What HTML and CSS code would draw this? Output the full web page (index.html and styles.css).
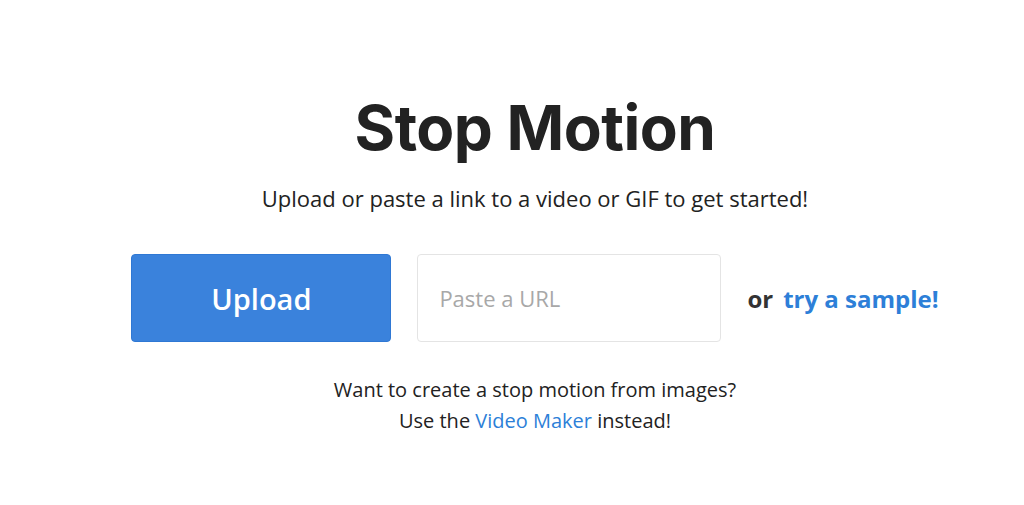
FILE: index.html
```html
<!DOCTYPE html>
<html lang="en">
<head>
    <meta charset="UTF-8">
    <meta name="viewport" content="width=device-width, initial-scale=1.0">
    <title>Stop Motion</title>
    <link rel="stylesheet" href="styles.css">
</head>
<body>
    <div class="container">
        <h1>Stop Motion</h1>
        <p class="lead">Upload or paste a link to a video or GIF to get started!</p>

        <div class="actions">
            <button type="button" class="upload-btn">Upload</button>
            <input type="text" class="url-input" placeholder="Paste a URL">
            <div class="sample">
                <span class="or">or</span>
                <a href="#" class="sample-link">try a sample!</a>
            </div>
        </div>

        <p class="note">
            Want to create a stop motion from images?<br>
            Use the <a href="#">Video Maker</a> instead!
        </p>
    </div>
</body>
</html>
```

FILE: styles.css
```css
body {
    font-family: "Open Sans", Arial, sans-serif;
    background-color: #fff;
    color: #222;
    margin: 0;
    padding: 0 0 0 46px;
}

.container {
    display: flex;
    flex-direction: column;
    align-items: center;
    padding-top: 90px;
}

h1 {
    font-family: Inter, "Open Sans", sans-serif;
    font-size: 62px;
    font-weight: 700;
    letter-spacing: -0.5px;
    color: #222;
    margin: 0;
    line-height: 76px;
}

.lead {
    font-size: 22px;
    color: #222;
    margin: 17px 0 0;
    line-height: 30px;
}

.actions {
    display: flex;
    align-items: center;
    gap: 26px;
    margin-top: 41px;
}

.upload-btn {
    width: 260px;
    height: 88px;
    background-color: #3a82dc;
    color: #fff;
    font-family: "Open Sans", sans-serif;
    font-size: 29px;
    font-weight: 600;
    border: 1px solid #2f78d4;
    border-radius: 4px;
    cursor: pointer;
}

.url-input {
    width: 304px;
    height: 88px;
    padding: 0 21px;
    font-family: "Open Sans", sans-serif;
    font-size: 22px;
    border: 1px solid #e4e4e4;
    border-radius: 4px;
    box-sizing: border-box;
    outline: none;
}

.url-input::placeholder {
    color: #a8a8a8;
}

.sample {
    display: flex;
    gap: 10px;
    font-size: 24px;
    font-weight: 700;
}

.or {
    color: #333;
}

.sample-link {
    color: #2d7fd8;
    text-decoration: none;
}

.note {
    text-align: center;
    font-size: 20px;
    line-height: 31px;
    color: #222;
    margin: 32px 0 0;
}

.note a {
    color: #2d7fd8;
    text-decoration: none;
}
```
